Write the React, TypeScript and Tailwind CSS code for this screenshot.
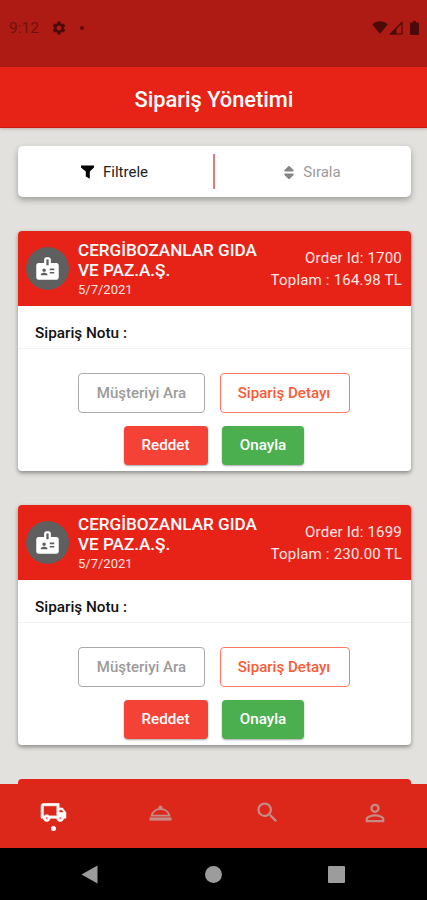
import { FaSort } from "react-icons/fa"
import { MdBadge, MdOutlineLocalShipping, MdPersonOutline, MdSearch, MdSettings } from "react-icons/md"

const orders = [
  { id: 1700, customer: "CERGİBOZANLAR GIDA VE PAZ.A.Ş.", date: "5/7/2021", total: "164.98" },
  { id: 1699, customer: "CERGİBOZANLAR GIDA VE PAZ.A.Ş.", date: "5/7/2021", total: "230.00" },
]

function FilterIcon() {
  return (
    <svg viewBox="0 0 13 14" className="h-[14px] w-[13px]" fill="currentColor">
      <path d="M0 0.5H13V2.4L8.8 6.6V13.7L4.8 11.4V6.6L0 2.4Z" />
    </svg>
  )
}

function ClocheIcon() {
  return (
    <svg viewBox="0 0 23 16" className="h-4 w-[23px]">
      <path d="M2.6 10.6C3.5 6.8 7 4 11.5 4S19.5 6.8 20.4 10.6Z" fill="none" stroke="currentColor" strokeWidth="1.8" />
      <circle cx="11.5" cy="2.3" r="1.9" fill="currentColor" />
      <path d="M0.5 12.4H22.5V15.6H0.5Z" fill="currentColor" />
    </svg>
  )
}

function StatusBar() {
  return (
    <div className="flex h-[67px] shrink-0 items-start justify-between bg-[#ad1b14] pt-[18px] pr-2 pl-[9px] text-[#4c0b08]">
      <div className="flex h-[19px] items-center">
        <span className="w-[42px] pt-px text-[15.5px] leading-[19px] text-[#6f120d]">9:12</span>
        <MdSettings className="h-4 w-4" />
        <span className="ml-[13px] h-1 w-1 rounded-full bg-[#5c0e0a]" />
      </div>
      <div className="flex h-[19px] items-center">
        <svg viewBox="0 0 16 13" className="h-[13px] w-4" fill="currentColor">
          <path d="M8 13 0.2 3.2C4.6-0.7 11.4-0.7 15.8 3.2Z" />
        </svg>
        <svg viewBox="0 0 14 14" className="ml-px h-[14px] w-[14px]">
          <path d="M1.5 13 13 1.5V13Z" fill="none" stroke="currentColor" strokeWidth="1.2" />
          <path d="M1 13.5 7.5 7V13.5Z" fill="currentColor" />
        </svg>
        <svg viewBox="0 0 9 14" className="ml-[7px] h-[14px] w-[9px]" fill="currentColor">
          <path d="M3 0H6V1.4H8Q9 1.4 9 2.4V13Q9 14 8 14H1Q0 14 0 13V2.4Q0 1.4 1 1.4H3Z" />
        </svg>
      </div>
    </div>
  )
}

function FilterBar() {
  return (
    <div className="flex h-[51px] shrink-0 items-center rounded-[5px] bg-white text-[15px] shadow-[0_3px_6px_rgba(0,0,0,0.3)]">
      <button className="flex h-full w-[195px] items-center justify-center gap-[9px] pt-px pr-[2px] text-[#222]">
        <span className="text-black">
          <FilterIcon />
        </span>
        <span>Filtrele</span>
      </button>
      <span className="h-[35px] w-[2px] bg-[#de7d80]" />
      <button className="flex h-full w-[196px] items-center justify-center gap-[7px] pt-px pr-[3px] text-[#9b9b9b]">
        <FaSort className="h-[17px] w-[14px] text-[#858585]" />
        <span>Sırala</span>
      </button>
    </div>
  )
}

function OrderCard({ order }: { order: (typeof orders)[number] }) {
  return (
    <div className="h-[240px] shrink-0 overflow-hidden rounded-[4px] bg-white shadow-[0_2px_4px_rgba(0,0,0,0.4)]">
      <div className="flex h-[75px] items-center bg-[#e72318] pr-[9px] pl-2 text-white">
        <div className="flex h-[43px] w-[43px] shrink-0 items-center justify-center rounded-full bg-[#5f5f5f]">
          <MdBadge className="h-[27px] w-[27px]" />
        </div>
        <div className="ml-[9px] w-[186px] shrink-0">
          <p className="text-[17.1px] leading-[20px] font-medium">{order.customer}</p>
          <p className="mt-[2px] text-[13px] leading-4 text-[#ffe3e1]">{order.date}</p>
        </div>
        <div className="flex-1 text-right text-[15px] leading-[22px] tracking-[0.2px] whitespace-nowrap text-[#ffe7e5]">
          <p>Order Id: {order.id}</p>
          <p>Toplam : {order.total} TL</p>
        </div>
      </div>
      <div className="flex h-[43px] items-center border-b border-[#f3f3f3] pt-[12px] pl-[17px] text-[15.3px] font-medium text-[#111]">
        Sipariş Notu :
      </div>
      <div className="flex justify-center gap-[15px] pt-6 pr-[1px] text-[15px] font-medium">
        <button className="h-[40px] w-[127px] rounded-[4px] border border-[#aaa] text-[#9b9b9b]">Müşteriyi Ara</button>
        <button className="h-[40px] w-[130px] rounded-[4px] border border-[#ff7765] pr-[2px] text-[15.1px] text-[#fa5b38]">
          Sipariş Detayı
        </button>
      </div>
      <div className="flex justify-center gap-[14px] pt-[13px] pr-[1px] text-[15.2px] font-medium text-white">
        <button className="h-[39px] w-[84px] rounded-[4px] bg-[#f44336] pr-px shadow-[0_1px_2px_rgba(0,0,0,0.35)]">Reddet</button>
        <button className="h-[39px] w-[82px] rounded-[4px] bg-[#4bae4f] shadow-[0_1px_2px_rgba(0,0,0,0.35)]">Onayla</button>
      </div>
    </div>
  )
}

function BottomNav() {
  return (
    <nav className="grid h-[64px] shrink-0 grid-cols-4 bg-[#db281b] text-[#c68b87]">
      <button className="flex flex-col items-center pt-[15px] text-white">
        <MdOutlineLocalShipping
          className="h-[27px] w-[27px] [&_[fill=none]]:stroke-none"
          stroke="currentColor"
          strokeWidth={0.6}
        />
        <span className="h-[5px] w-[5px] rounded-full bg-white" />
      </button>
      <button className="flex justify-center pt-[21px] pl-px">
        <ClocheIcon />
      </button>
      <button className="flex justify-center pt-[15px] pl-px">
        <MdSearch className="h-[27px] w-[27px]" />
      </button>
      <button className="flex justify-center pt-[15px] pl-[2px]">
        <MdPersonOutline className="h-7 w-7" />
      </button>
    </nav>
  )
}

function SystemNav() {
  return (
    <div className="flex h-[52px] shrink-0 items-center justify-between bg-black pr-[82px] pl-[81px] text-[#9c9c9c]">
      <svg viewBox="0 0 17 19" className="h-[19px] w-[17px]" fill="currentColor">
        <path d="M0.5 9.5 16.5 0.5V18.5Z" />
      </svg>
      <span className="h-[17px] w-[17px] rounded-full bg-current" />
      <span className="h-[17px] w-[17px] rounded-[1px] bg-current" />
    </div>
  )
}

export default function App() {
  return (
    <div className="flex h-[900px] w-[427px] flex-col overflow-hidden bg-[#e2e1de] font-[Roboto,sans-serif]">
      <StatusBar />
      <header className="z-10 flex h-[61px] shrink-0 items-center justify-center border-b border-[#c81d14] bg-[#e72318] pt-[6px] pl-px text-[21.8px] font-medium text-white shadow-[0_1px_3px_rgba(120,0,0,0.25)]">
        Sipariş Yönetimi
      </header>
      <main className="flex min-h-0 flex-1 flex-col gap-[34px] overflow-hidden pt-[18px] pr-4 pl-[18px]">
        <FilterBar />
        {orders.map((order) => (
          <OrderCard key={order.id} order={order} />
        ))}
        <div className="h-10 shrink-0 rounded-t-[4px] bg-[#e0251a]" />
      </main>
      <BottomNav />
      <SystemNav />
    </div>
  )
}
